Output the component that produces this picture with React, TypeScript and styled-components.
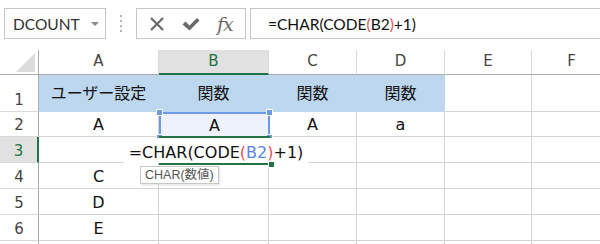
import React from "react";
import styled, { createGlobalStyle } from "styled-components";

const GlobalStyle = createGlobalStyle`
  html, body {
    margin: 0;
    padding: 0;
    background: #ffffff;
    overflow: hidden;
  }
  body {
    font-family: "DejaVu Sans", "Noto Sans CJK JP", sans-serif;
  }
`;

const GREEN = "#217346";
const GRID = "#d4d4d4";
const BLUE = "#6e98e8";

const colWidths = [39, 120, 110, 88, 88, 87, 80];
const rowHeights = [25, 37, 25, 26, 26, 26, 26, 26];
const colNames = ["A", "B", "C", "D", "E", "F"];

type Row = { label: string; cells: string[]; fill?: boolean };

const rows: Row[] = [
  { label: "1", cells: ["ユーザー設定", "関数", "関数", "関数", "", ""], fill: true },
  { label: "2", cells: ["A", "", "A", "a", "", ""] },
  { label: "3", cells: ["", "", "", "", "", ""] },
  { label: "4", cells: ["C", "", "", "", "", ""] },
  { label: "5", cells: ["D", "", "", "", "", ""] },
  { label: "6", cells: ["E", "", "", "", "", ""] },
  { label: "", cells: ["", "", "", "", "", ""] },
];

// toolbar
const Toolbar = styled.div`
  display: flex;
  align-items: center;
  height: 50px;
  box-sizing: border-box;
  padding: 8px 0 11px 4px;
`;

const NameBox = styled.div`
  width: 102px;
  height: 31px;
  box-sizing: border-box;
  border: 1px solid #c6c6c6;
  display: flex;
  align-items: center;
  justify-content: space-between;
  padding: 0 6px 0 8px;
  font-family: "Lato", sans-serif;
  font-size: 15.5px;
  color: #333;
`;

const DropArrow = styled.span`
  width: 0;
  height: 0;
  border-left: 4px solid transparent;
  border-right: 4px solid transparent;
  border-top: 4px solid #8a8a8a;
`;

const Grip = styled.div`
  width: 30px;
  display: flex;
  flex-direction: column;
  align-items: center;
  gap: 3px;
`;

const Dot = styled.span`
  width: 2px;
  height: 2px;
  background: #b4b4b4;
`;

const ButtonGroup = styled.div`
  width: 110px;
  height: 31px;
  box-sizing: border-box;
  border: 1px solid #c6c6c6;
  display: flex;
  align-items: center;
  justify-content: space-around;
  padding: 0 4px;
`;

const Fx = styled.span`
  font-family: "DejaVu Serif", "Liberation Serif", serif;
  font-style: italic;
  font-size: 19px;
  color: #6a6a6a;
  letter-spacing: -1px;
`;

const FormulaBar = styled.div`
  flex: 1;
  height: 31px;
  margin-left: 4px;
  box-sizing: border-box;
  border: 1px solid #c6c6c6;
  border-right: none;
  display: flex;
  align-items: center;
  padding-left: 17px;
  font-family: "Lato", sans-serif;
  font-size: 15.5px;
  color: #111;
`;

const Paren = styled.span<{ $c: string }>`
  color: ${(p) => p.$c};
`;

// sheet
const Sheet = styled.div`
  position: relative;
  display: grid;
  grid-template-columns: ${colWidths.map((w) => `${w}px`).join(" ")};
  grid-template-rows: ${rowHeights.map((h) => `${h}px`).join(" ")};
`;

const Corner = styled.div`
  box-sizing: border-box;
  border-right: 1px solid #ababab;
  border-bottom: 1px solid #ababab;
  background: #fff;
  display: flex;
  align-items: flex-end;
  justify-content: flex-end;
  padding: 0 3px 2px 0;
`;

const ColHeader = styled.div<{ $active?: boolean }>`
  box-sizing: border-box;
  display: flex;
  align-items: center;
  justify-content: center;
  padding-bottom: 2px;
  font-size: 15px;
  color: ${(p) => (p.$active ? GREEN : "#444")};
  background: ${(p) => (p.$active ? "#e1e1e1" : "#fff")};
  border-right: 1px solid #dadada;
  border-bottom: ${(p) => (p.$active ? `2px solid ${GREEN}` : "1px solid #ababab")};
`;

const RowHeader = styled.div<{ $active?: boolean }>`
  box-sizing: border-box;
  display: flex;
  align-items: flex-end;
  justify-content: center;
  padding-bottom: 2px;
  font-size: 15px;
  color: ${(p) => (p.$active ? GREEN : "#444")};
  background: ${(p) => (p.$active ? "#e1e1e1" : "#fff")};
  border-right: ${(p) => (p.$active ? `2px solid ${GREEN}` : "1px solid #ababab")};
  border-bottom: 1px solid #dadada;
`;

const Cell = styled.div<{ $fill?: boolean }>`
  box-sizing: border-box;
  display: flex;
  align-items: flex-end;
  justify-content: center;
  padding-bottom: ${(p) => (p.$fill ? "7px" : "2px")};
  font-size: 16px;
  color: #111;
  white-space: nowrap;
  background: ${(p) => (p.$fill ? "#bdd7ee" : "#fff")};
  border-right: 1px solid ${(p) => (p.$fill ? "#bdd7ee" : GRID)};
  border-bottom: 1px solid ${(p) => (p.$fill ? "#bdd7ee" : GRID)};
`;

// overlays (positions are relative to the sheet)
const RangeBox = styled.div`
  position: absolute;
  left: 159px;
  top: 62px;
  width: 111px;
  height: 26px;
  box-sizing: border-box;
  border: 2px solid ${BLUE};
  background: #edf2fc;
  display: flex;
  align-items: flex-end;
  justify-content: center;
  padding-bottom: 1px;
  font-size: 16px;
  color: #111;
`;

const Handle = styled.span<{ $x: "l" | "r"; $y: "t" | "b"; $c: string }>`
  position: absolute;
  width: 5px;
  height: 5px;
  background: ${(p) => p.$c};
  border: 1px solid #fff;
  ${(p) => (p.$x === "l" ? "left: -5px;" : "right: -5px;")}
  ${(p) => (p.$y === "t" ? "top: -5px;" : "bottom: -5px;")}
`;

const EditBox = styled.div`
  position: absolute;
  left: 124px;
  top: 88px;
  width: 184px;
  height: 25px;
  background: #fff;
  display: flex;
  align-items: flex-end;
  justify-content: center;
  padding-bottom: 1px;
  box-sizing: border-box;
  font-size: 16px;
  color: #111;
  white-space: nowrap;
  z-index: 2;
`;

const ActiveCell = styled.div`
  position: absolute;
  left: 159px;
  top: 86px;
  width: 111px;
  height: 29px;
  box-sizing: border-box;
  border-top: 2px solid ${GREEN};
  border-bottom: 2px solid ${GREEN};
  z-index: 3;
  pointer-events: none;
`;

const Tip = styled.div`
  position: absolute;
  left: 140px;
  top: 116px;
  height: 18px;
  padding: 0 4px;
  box-sizing: border-box;
  border: 1px solid #c8c8c8;
  background: #fff;
  box-shadow: 1px 1px 2px rgba(0, 0, 0, 0.12);
  font-family: "Liberation Sans", "Noto Sans CJK JP", sans-serif;
  font-size: 12.5px;
  line-height: 16px;
  color: #555;
  z-index: 4;
`;

const CloseIcon = () => (
  <svg width="16" height="16" viewBox="0 0 16 16">
    <path d="M2 2 L14 14 M14 2 L2 14" stroke="#6a6a6a" strokeWidth="2.2" fill="none" />
  </svg>
);

const CheckIcon = () => (
  <svg width="18" height="16" viewBox="0 0 18 16">
    <path d="M0.5 8.5 L3.5 5.5 L7.5 9.5 L15 2 L17.5 4.5 L7.5 14.5 Z" fill="#6a6a6a" />
  </svg>
);

const CornerTriangle = () => (
  <svg width="19" height="19" viewBox="0 0 19 19">
    <path d="M19 0 L19 19 L0 19 Z" fill="#dcdcdc" />
  </svg>
);

const Formula: React.FC<{ refColor: string; parenColor: string }> = ({ refColor, parenColor }) => (
  <span>
    =CHAR(CODE<Paren $c={parenColor}>(</Paren>
    <Paren $c={refColor}>B2</Paren>
    <Paren $c={parenColor}>)</Paren>+1)
  </span>
);

export default function App() {
  return (
    <>
      <GlobalStyle />
      <Toolbar>
        <NameBox>
          DCOUNT
          <DropArrow />
        </NameBox>
        <Grip>
          <Dot />
          <Dot />
          <Dot />
          <Dot />
        </Grip>
        <ButtonGroup>
          <CloseIcon />
          <CheckIcon />
          <Fx>fx</Fx>
        </ButtonGroup>
        <FormulaBar>
          <Formula refColor="#111" parenColor="#e8505b" />
        </FormulaBar>
      </Toolbar>
      <Sheet>
        <Corner>
          <CornerTriangle />
        </Corner>
        {colNames.map((c) => (
          <ColHeader key={c} $active={c === "B"}>
            {c}
          </ColHeader>
        ))}
        {rows.map((r, ri) => (
          <React.Fragment key={ri}>
            <RowHeader $active={r.label === "3"}>{r.label}</RowHeader>
            {r.cells.map((v, i) => (
              <Cell key={i} $fill={r.fill && i < 4}>
                {v}
              </Cell>
            ))}
          </React.Fragment>
        ))}
        <RangeBox>
          A
          <Handle $x="l" $y="t" $c={BLUE} />
          <Handle $x="r" $y="t" $c={BLUE} />
          <Handle $x="l" $y="b" $c={BLUE} />
          <Handle $x="r" $y="b" $c={BLUE} />
        </RangeBox>
        <EditBox>
          <Formula refColor="#5b86e5" parenColor="#e8505b" />
        </EditBox>
        <ActiveCell>
          <Handle $x="r" $y="b" $c={GREEN} />
        </ActiveCell>
        <Tip>CHAR(数値)</Tip>
      </Sheet>
    </>
  );
}
